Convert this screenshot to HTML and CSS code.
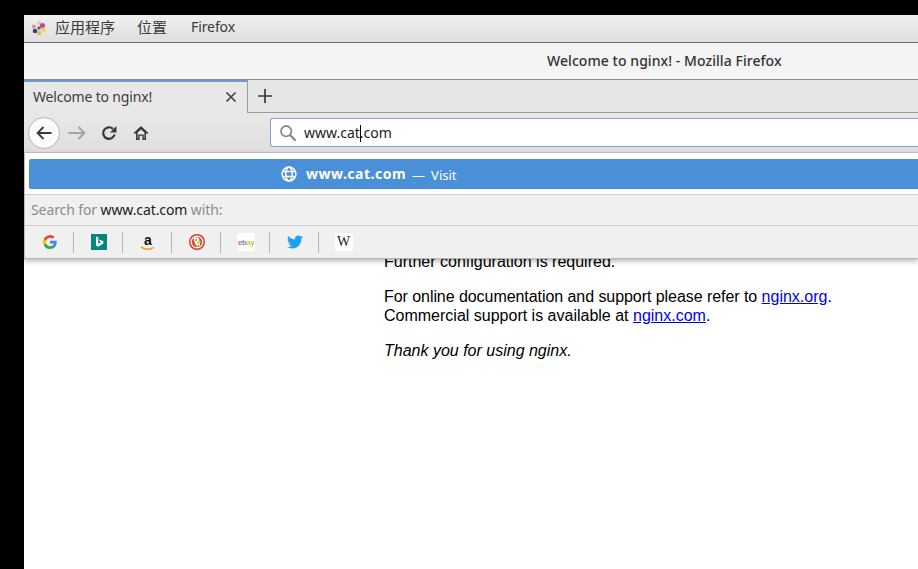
FILE: index.html
```html
<!DOCTYPE html>
<html lang="en">
<head>
    <meta charset="UTF-8">
    <meta name="viewport" content="width=device-width, initial-scale=1.0">
    <title>Welcome to nginx!</title>
    <link rel="stylesheet" href="styles.css">
</head>
<body>
    <div class="screen">
        <div class="topbar">
            <svg class="apps-logo" width="16" height="16" viewBox="0 0 16 16">
                <circle cx="8" cy="3" r="2.200" fill="#eec0d4"/>
                <circle cx="11.500" cy="5.500" r="2.500" fill="#b8468f"/>
                <circle cx="12.500" cy="10" r="2.400" fill="#f0d470"/>
                <circle cx="8" cy="13" r="2.200" fill="#e8bc48"/>
                <circle cx="4" cy="11" r="2.300" fill="#3c3c7c"/>
                <circle cx="2.800" cy="6.500" r="2" fill="#dc9484"/>
                <circle cx="8" cy="8" r="1.800" fill="#6c5a96"/>
            </svg>
            <span class="menu menu-apps">应用程序</span>
            <span class="menu menu-places">位置</span>
            <span class="menu menu-latin">Firefox</span>
        </div>

        <div class="titlebar">Welcome to nginx! - Mozilla Firefox</div>

        <div class="tabstrip">
            <div class="tab">
                <span class="tab-title">Welcome to nginx!</span>
                <svg width="12" height="12" viewBox="0 0 12 12">
                    <path d="M1.500 1.500l9 9M10.500 1.500l-9 9" stroke="#444" stroke-width="1.700" fill="none"/>
                </svg>
            </div>
            <div class="newtab">
                <svg width="14" height="14" viewBox="0 0 14 14">
                    <path d="M7 0v14M0 7h14" stroke="#3a3a3a" stroke-width="1.700" fill="none"/>
                </svg>
            </div>
        </div>

        <div class="toolbar">
            <div class="back-btn">
                <svg width="16" height="14" viewBox="0 0 16 14">
                    <path d="M15.500 7H2M7.500 1L1.600 7l5.900 6" stroke="#3a3a3a" stroke-width="1.900" fill="none"/>
                </svg>
            </div>
            <div class="nav-btn forward-btn">
                <svg width="18" height="14" viewBox="0 0 18 14">
                    <path d="M.5 7H16M10.500 1l5.900 6-5.900 6" stroke="#a4a4a4" stroke-width="1.900" fill="none"/>
                </svg>
            </div>
            <div class="nav-btn">
                <svg width="16" height="16" viewBox="0 0 16 16">
                    <path d="M13.600 9.500A5.800 5.800 0 1 1 12 3.900" stroke="#3a3a3a" stroke-width="2.200" fill="none"/>
                    <path d="M15.500 1v6.600H8.900z" fill="#3a3a3a"/>
                </svg>
            </div>
            <div class="nav-btn">
                <svg width="16" height="16" viewBox="0 0 16 16">
                    <path d="M8 1L.6 8l1.100 1.100L3 7.900V15h3.600v-4.200h2.800V15H13V7.900l1.300 1.200L15.400 8z" fill="#3a3a3a"/>
                    <path d="M4.600 7.500L8 4.400l3.400 3.100V13.400H10.800V9.400H5.200v4H4.600z" fill="#e8e8e8"/>
                </svg>
            </div>
            <div class="urlbar">
                <svg width="18" height="18" viewBox="0 0 18 18">
                    <circle cx="7.200" cy="7.200" r="5.200" stroke="#8a8a8a" stroke-width="1.800" fill="none"/>
                    <path d="M11 11l5.600 5.600" stroke="#8a8a8a" stroke-width="2.200" fill="none"/>
                </svg>
                <span class="url-text">www.cat<i class="caret"></i>.com</span>
            </div>
        </div>

        <div class="dropdown">
            <div class="result">
                <svg width="16" height="16" viewBox="0 0 16 16">
                    <g stroke="#fff" stroke-width="1.500" fill="none">
                        <circle cx="8" cy="8" r="6.900"/>
                        <ellipse cx="8" cy="8" rx="3.200" ry="6.900"/>
                        <path d="M1.600 5.400h12.800M1.600 10.600h12.800"/>
                    </g>
                </svg>
                <span class="result-url">www.cat.com</span>
                <span class="result-dash">—</span>
                <span class="result-action">Visit</span>
            </div>
            <div class="search-for">Search for <span class="search-term">www.cat.com</span> with:</div>
            <div class="engines">
                <div class="engine">
                    <svg width="14" height="14" viewBox="0 0 24 24">
                        <path d="M23.500 12.300c0-.9-.1-1.600-.2-2.300H12v4.400h6.500a5.600 5.600 0 0 1-2.400 3.600v3h3.900c2.300-2.100 3.500-5.100 3.500-8.700z" fill="#4285f4"/>
                        <path d="M12 24c3.200 0 6-1.100 8-2.900l-3.900-3c-1.100.7-2.500 1.200-4.100 1.200-3.100 0-5.800-2.100-6.700-5H1.300v3.100A12 12 0 0 0 12 24z" fill="#34a853"/>
                        <path d="M5.300 14.300a7.200 7.200 0 0 1 0-4.600V6.600h-4a12 12 0 0 0 0 10.800z" fill="#fbbc05"/>
                        <path d="M12 4.800c1.800 0 3.300.6 4.600 1.800L20 3.200A12 12 0 0 0 1.300 6.600l4 3.100c.9-2.800 3.600-4.900 6.700-4.900z" fill="#ea4335"/>
                    </svg>
                </div>
                <div class="engine">
                    <svg width="16" height="16" viewBox="0 0 16 16">
                        <rect width="16" height="16" fill="#00897b"/>
                        <path d="M5 2.500l2.200.8v6.400l3-1.500-1.400-.7-.8-2 4.300 1.500v2.500L7.200 12.800 5 11.600z" fill="#fff"/>
                    </svg>
                </div>
                <div class="engine engine-amazon">
                    <span class="amazon-a">a</span>
                    <svg width="16" height="5" viewBox="0 0 16 5">
                        <path d="M1 .8c4 3 9 3 13 .6" stroke="#f39a1d" stroke-width="1.500" fill="none"/>
                    </svg>
                </div>
                <div class="engine">
                    <svg width="16" height="16" viewBox="0 0 16 16">
                        <circle cx="8" cy="8" r="8" fill="#d5402b"/>
                        <circle cx="8" cy="8" r="6.500" fill="#fff"/>
                        <circle cx="8" cy="8" r="5.300" fill="#d9562e"/>
                        <path d="M4.800 3.900c2-1.300 4.700-.7 5.300 1.100.6 2 .3 4 1 6.800l-2.600 1.500C7 10.500 4.600 7 4.800 3.900z" fill="#fff"/>
                        <circle cx="7" cy="6" r=".8" fill="#333"/>
                        <path d="M7.800 8l3.800-.9.200 1.700-3.700.7z" fill="#eabb2e"/>
                        <path d="M8.300 11l2.500.7-.4 1.200-1.900-.3z" fill="#62a83c"/>
                    </svg>
                </div>
                <div class="engine">
                    <span class="fav-box ebay"><b class="eb-e">e</b><b class="eb-b">b</b><b class="eb-a">a</b><b class="eb-y">y</b></span>
                </div>
                <div class="engine">
                    <svg width="16" height="16" viewBox="0 0 24 24">
                        <path d="M23.953 4.570a10 10 0 0 1-2.825.775 4.958 4.958 0 0 0 2.163-2.723c-.951.555-2.005.959-3.127 1.184a4.920 4.920 0 0 0-8.384 4.482C7.690 8.095 4.067 6.130 1.640 3.162a4.822 4.822 0 0 0-.666 2.475c0 1.710.870 3.213 2.188 4.096a4.904 4.904 0 0 1-2.228-.616v.060a4.923 4.923 0 0 0 3.946 4.827 4.996 4.996 0 0 1-2.212.085 4.936 4.936 0 0 0 4.604 3.417 9.867 9.867 0 0 1-6.102 2.105c-.390 0-.779-.023-1.170-.067a13.995 13.995 0 0 0 7.557 2.209c9.053 0 13.998-7.496 13.998-13.985 0-.210 0-.420-.015-.630A9.935 9.935 0 0 0 24 4.590z" fill="#1da1f2"/>
                    </svg>
                </div>
                <div class="engine engine-wiki">
                    <span class="fav-box wiki">W</span>
                </div>
            </div>
        </div>

        <div class="page">
            <p>Further configuration is required.</p>
            <p><span class="docs-line">For online documentation and support please refer to</span> <a href="#">nginx.org</a>.<br>
            Commercial support is available at <a href="#">nginx.com</a>.</p>
            <p><em>Thank you for using nginx.</em></p>
        </div>
    </div>
</body>
</html>
```

FILE: styles.css
```css
html, body {
    height: 100%;
}
body {
    margin: 0;
    padding: 15px 0 0 24px;
    box-sizing: border-box;
    background: #000;
    overflow: hidden;
    font-family: "Noto Sans", "Noto Sans CJK SC", sans-serif;
}
.screen {
    position: relative;
    height: 100%;
    display: flex;
    flex-direction: column;
    background: #fff;
}

/* desktop panel */
.topbar {
    height: 28px;
    flex: none;
    box-sizing: border-box;
    display: flex;
    align-items: center;
    padding: 0 0 5px 7px;
    font-size: 15px;
    color: #3a3a3a;
    background: linear-gradient(#f0f0f0, #dedede);
    border-bottom: 1px solid #6e6e6e;
}
.apps-logo {
    margin: 3px 8px 0 0;
}
.menu-apps {
    margin-right: 22px;
}
.menu-places {
    margin-right: 24px;
}
.menu-latin {
    font-size: 14px;
    letter-spacing: -0.1px;
}

/* window title */
.titlebar {
    height: 37px;
    flex: none;
    box-sizing: border-box;
    padding-left: 523px;
    line-height: 35px;
    font-size: 14px;
    font-weight: 500;
    letter-spacing: 0.06px;
    color: #2e3436;
    background: #f4f4f4;
    border-bottom: 1px solid #8c8c8c;
}

/* tabs */
.tabstrip {
    height: 33px;
    flex: none;
    display: flex;
    background: #e6e6e6;
    box-sizing: border-box;
    border-bottom: 1px solid #9a9a9a;
}
.tab {
    width: 224px;
    height: 33px;
    box-sizing: border-box;
    display: flex;
    align-items: center;
    justify-content: space-between;
    padding: 0 10px 2px 9px;
    border-top: 2px solid #6d9ac9;
    border-right: 1px solid #9a9a9a;
    background: #e8e8e8;
    font-size: 14px;
    letter-spacing: -0.17px;
    color: #3c3c3c;
}
.newtab {
    width: 33px;
    display: flex;
    align-items: center;
    justify-content: center;
}

/* nav toolbar */
.toolbar {
    height: 40px;
    flex: none;
    display: flex;
    align-items: center;
    padding-left: 4px;
    background: linear-gradient(#e8e8e8, #dfdfdf);
    border-bottom: 1px solid #c8c4be;
    box-sizing: border-box;
}
.back-btn {
    width: 32px;
    height: 32px;
    flex: none;
    box-sizing: border-box;
    display: flex;
    align-items: center;
    justify-content: center;
    border-radius: 50%;
    border: 1px solid #b4b4b4;
    background: #fbfbfb;
}
.nav-btn {
    width: 32px;
    flex: none;
    display: flex;
    justify-content: center;
}
.forward-btn {
    margin-left: 1px;
}
.urlbar {
    flex: 1;
    height: 29px;
    margin-left: 113px;
    box-sizing: border-box;
    display: flex;
    align-items: center;
    padding-left: 8px;
    background: #fff;
    border: 1px solid #7fa6d0;
    border-right: none;
    border-radius: 3px 0 0 3px;
    font-size: 14px;
    color: #1c1c1c;
}
.url-text {
    margin-left: 7px;
}
.caret {
    display: inline-block;
    width: 1px;
    height: 17px;
    margin-right: -1px;
    vertical-align: -4px;
    background: #000;
}

/* url dropdown sits over the page */
.dropdown {
    position: absolute;
    top: 138px;
    left: 0;
    right: 0;
    background: #fff;
    border-left: 1px solid #bdbdbd;
    box-shadow: 0 2px 5px rgba(0, 0, 0, 0.3);
}
.result {
    height: 30px;
    margin: 6px 0 5px 4px;
    box-sizing: border-box;
    display: flex;
    align-items: center;
    padding: 0 0 1px 252px;
    background: #4a90d9;
    border-radius: 2px 0 0 2px;
    color: #fff;
}
.result-url {
    margin-left: 9px;
    font-size: 14px;
    font-weight: 700;
    letter-spacing: 0.5px;
}
.result-dash {
    margin-left: 6px;
    padding-top: 2px;
    font-size: 13px;
}
.result-action {
    margin-left: 6px;
    padding-top: 2px;
    font-size: 13px;
}
.search-for {
    height: 32px;
    box-sizing: border-box;
    padding-left: 6px;
    line-height: 29px;
    font-size: 14px;
    letter-spacing: -0.1px;
    color: #8c8c8c;
    background: #f0f0f0;
    border-top: 1px solid #cfcfcf;
    border-bottom: 1px solid #cfcfcf;
}
.search-term {
    color: #1c1c1c;
}
.engines {
    height: 33px;
    display: flex;
    align-items: center;
    background: #f0f0f0;
    border-bottom: 1px solid #b8b8b8;
    box-sizing: border-box;
}
.engine {
    width: 49px;
    height: 21px;
    flex: none;
    box-sizing: border-box;
    display: flex;
    align-items: center;
    justify-content: center;
    padding-left: 2px;
    border-right: 1px solid #b4b4b4;
}
.engine:last-child {
    border-right: none;
}
.engine-amazon {
    flex-direction: column;
}
.engine-wiki {
    padding-left: 0;
}
.amazon-a {
    font-family: "Liberation Sans", sans-serif;
    font-size: 14px;
    font-weight: 700;
    line-height: 12px;
    color: #111;
}
.fav-box {
    width: 18px;
    height: 18px;
    display: flex;
    align-items: center;
    justify-content: center;
    background: #fff;
    border-radius: 2px;
}
.ebay {
    font-family: "Liberation Sans", sans-serif;
    font-size: 8px;
    letter-spacing: -0.3px;
}
.ebay b {
    font-weight: 400;
}
.eb-e { color: #e53238; }
.eb-b { color: #0064d2; }
.eb-a { color: #f5af02; }
.eb-y { color: #86b817; }
.wiki {
    font-family: "Liberation Serif", serif;
    font-size: 14px;
    color: #222;
}

/* nginx page behind the dropdown */
.page {
    flex: 1;
    padding: 99px 0 0 360px;
    font-family: "Liberation Sans", Arial, sans-serif;
    font-size: 16px;
    line-height: 19px;
    color: #000;
}
.page p {
    margin: 0 0 16px;
}
.page a {
    color: #0000ee;
}
.docs-line {
    letter-spacing: -0.06px;
}
```
